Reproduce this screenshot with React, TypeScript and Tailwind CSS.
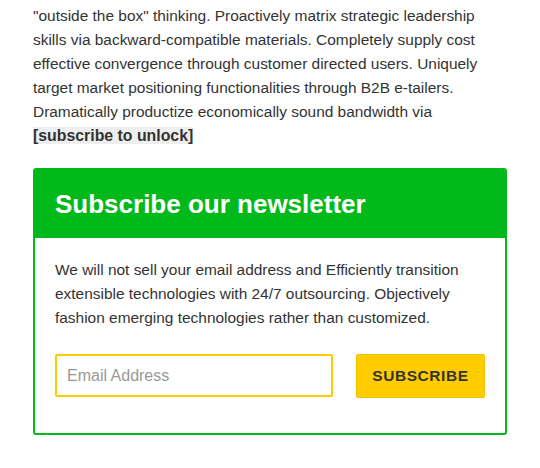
import React from 'react';

const App: React.FC = () => {
  return (
    <div className="bg-white w-[540px] h-[468px] overflow-hidden font-['Liberation_Sans',Arial,sans-serif] text-[#333]">
      <div className="px-[33px] pt-[4px]">
        <p className="text-[15.45px] leading-[24px]">
          "outside the box" thinking. Proactively matrix strategic leadership skills via backward-compatible materials. Completely supply cost effective convergence through customer directed users. Uniquely target market positioning functionalities through B2B e-tailers. Dramatically productize economically sound bandwidth via{' '}
          <strong className="bg-[#eeeeee] font-bold text-[15.85px]">[subscribe to unlock]</strong>
        </p>

        <div className="mt-[20px] border-2 border-[#02b91c] rounded-[3px] overflow-hidden">
          <div className="bg-[#02b91c] px-[20px] py-[19px]">
            <h2 className="text-[26px] leading-[30px] font-bold text-white">Subscribe our newsletter</h2>
          </div>
          <div className="px-[20px] pt-[20px] pb-[35px]">
            <p className="text-[15.45px] leading-[24px]">
              We will not sell your email address and Efficiently transition extensible technologies with 24/7 outsourcing. Objectively fashion emerging technologies rather than customized.
            </p>
            <form className="mt-[24px] flex items-start justify-between" onSubmit={(e) => e.preventDefault()}>
              <input
                type="email"
                placeholder="Email Address"
                className="w-[278px] h-[43px] border-2 border-[#ffcc00] rounded-[2px] px-[10px] text-[16px] text-[#333] placeholder:text-[#999] outline-none"
              />
              <button
                type="submit"
                className="w-[129px] h-[44px] bg-[#ffcc00] border border-[#f5c000] rounded-[2px] text-[15.45px] font-bold tracking-[0.6px] text-[#333]"
              >
                SUBSCRIBE
              </button>
            </form>
          </div>
        </div>
      </div>
    </div>
  );
};

export default App;
